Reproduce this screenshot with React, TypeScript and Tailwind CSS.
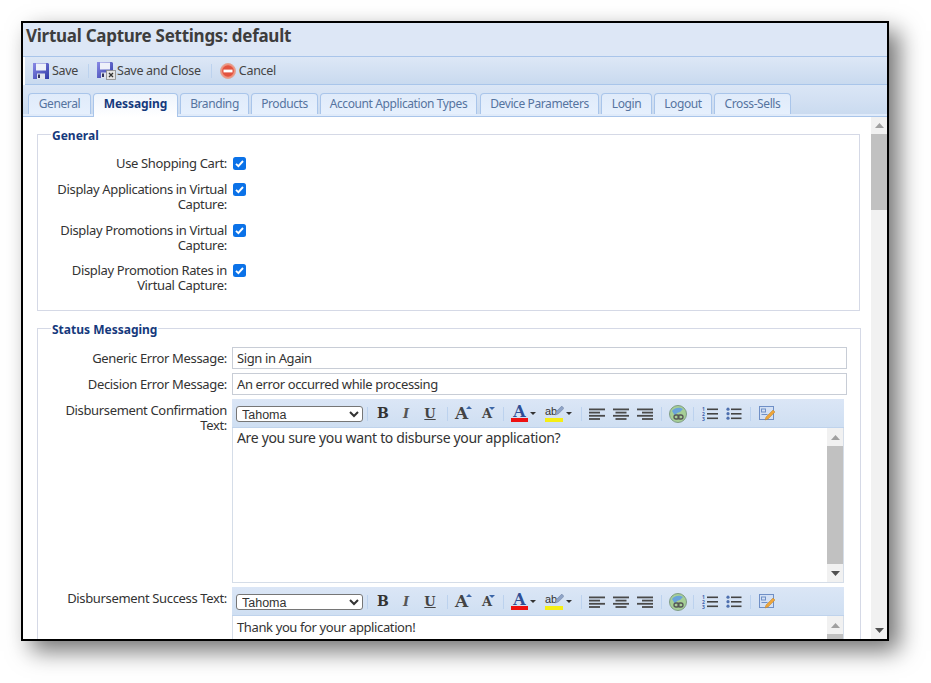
import React from "react";

const Save = ({ x = false }: { x?: boolean }) => (
  <svg width={x ? 19 : 16} height={x ? 18 : 16} viewBox={x ? "0 0 19 18" : "0 0 16 16"} className="shrink-0">
    <defs>
      <linearGradient id="sv" x1="0" y1="0" x2="1" y2="1">
        <stop offset="0" stopColor="#8a8ae6" />
        <stop offset="1" stopColor="#2f3aa8" />
      </linearGradient>
    </defs>
    <path d="M0 0h15l1 1v15H0z" fill="url(#sv)" />
    <rect x="3" y="0.5" width="10" height="7" fill="#eef1fa" />
    <rect x="4" y="10.5" width="8" height="5.5" fill="#dfe3ee" />
    <rect x="5" y="11.5" width="2" height="3.5" fill="#33345e" />
    {x && (
      <>
        <rect x="9.5" y="8.5" width="9" height="9" fill="#e4e4e4" stroke="#888" strokeWidth="0.8" />
        <path d="M12 11l4 4M16 11l-4 4" stroke="#333" strokeWidth="1.3" />
      </>
    )}
  </svg>
);

const Cancel = () => (
  <svg width="16" height="16" viewBox="0 0 16 16" className="shrink-0">
    <circle cx="8" cy="8" r="7.5" fill="#f0917e" stroke="#e0a796" />
    <circle cx="8" cy="8" r="5.8" fill="#e2533f" />
    <rect x="3.5" y="6.6" width="9" height="2.8" fill="#fff" />
  </svg>
);

const Sep = ({ cls }: { cls: string }) => <div className={`w-px h-[14px] shrink-0 bg-[#bcd2ee] ${cls}`} />;

const Caret = () => (
  <svg width="6" height="3" viewBox="0 0 6 3" className="shrink-0"><path d="M0 0h6L3 3z" fill="#333" /></svg>
);

const Lines = ({ a, cls }: { a: "l" | "c" | "r"; cls: string }) => {
  const w = [16, 11, 16, 11];
  return (
    <svg width="16" height="12" viewBox="0 0 16 12" className={`shrink-0 ${cls}`}>
      {w.map((v, i) => {
        const x = a === "l" ? 0 : a === "c" ? (16 - v) / 2 : 16 - v;
        return <rect key={i} x={x} y={i * 3.2 + 0.5} width={v} height="1.8" fill="#4a4a4a" />;
      })}
    </svg>
  );
};

const Toolbar = () => (
  <div className="h-[29px] shrink-0 flex items-center pl-1 pt-[1px] bg-gradient-to-b from-[#dbe6f6] to-[#cfdff2] border-b border-[#bfd3ec] tracking-normal">
    <select
      defaultValue="Tahoma"
      className="w-[127px] h-[16px] shrink-0 bg-white border border-[#767676] rounded-[3px] text-[12.5px] leading-none text-[#333] pl-[1px] [font-family:'Liberation_Sans',sans-serif]"
    >
      <option>Tahoma</option>
    </select>
    <Sep cls="ml-[4px]" />
    <span className="w-[30px] shrink-0 text-center text-[14px] font-bold text-[#333] [font-family:'DejaVu_Serif',serif]">B</span>
    <span className="w-[16px] shrink-0 text-center text-[13px] italic font-bold text-[#555] [font-family:'DejaVu_Serif',serif]">I</span>
    <span className="w-[32px] shrink-0 text-center text-[13px] font-bold underline text-[#444] [font-family:'DejaVu_Serif',serif]">U</span>
    <Sep cls="ml-[1px]" />
    <span className="relative w-[24px] shrink-0 pl-[7px] text-[17px] leading-none font-bold text-[#444] [font-family:'DejaVu_Serif',serif]">
      A<span className="absolute right-[0px] top-[1px] w-0 h-0 border-x-[3px] border-x-transparent border-b-[3px] border-b-[#3a66a8]" />
    </span>
    <span className="relative w-[30px] shrink-0 text-center text-[13px] leading-none font-bold text-[#444] [font-family:'DejaVu_Serif',serif]">
      A<span className="absolute right-[7px] top-[0px] w-0 h-0 border-x-[3px] border-x-transparent border-t-[3px] border-t-[#3a66a8]" />
    </span>
    <Sep cls="ml-[1px]" />
    <div className="flex items-center shrink-0 ml-[7px] gap-[2px]">
      <div className="flex flex-col items-center w-[17px]">
        <span className="text-[16px] leading-[13px] font-bold text-[#2f4f96] [font-family:'DejaVu_Serif',serif]">A</span>
        <span className="w-[17px] h-[4px] bg-[#ee1111]" />
      </div>
      <Caret />
    </div>
    <div className="flex items-center shrink-0 ml-[9px] gap-[3px]">
      <div className="flex flex-col w-[18px] relative">
        <span className="text-[11px] leading-[13px] text-[#333] [font-family:'Liberation_Sans',sans-serif]">ab</span>
        <svg width="10" height="11" viewBox="0 0 9 10" className="absolute right-[-1px] top-0"><path d="M1 9l1-3 5-5 2 2-5 5z" fill="#8fa4c8" stroke="#6d7f9f" strokeWidth="0.5" /></svg>
        <span className="w-[18px] h-[4px] bg-[#f5ee14]" />
      </div>
      <Caret />
    </div>
    <Sep cls="ml-[9px]" />
    <Lines a="l" cls="ml-[7px]" />
    <Lines a="c" cls="ml-[8px]" />
    <Lines a="r" cls="ml-[8px]" />
    <Sep cls="ml-[8px]" />
    <svg width="18" height="18" viewBox="0 0 18 18" className="ml-[7px] shrink-0">
      <circle cx="9" cy="9" r="8.5" fill="#a6cf96" stroke="#7f9c85" />
      <path d="M3 6c3-4 8-4 11-2l-3 3-3 1-2 3z" fill="#6aa3da" />
      <rect x="5" y="10" width="5" height="4" rx="2" fill="none" stroke="#555" strokeWidth="1.3" />
      <rect x="9" y="10" width="5" height="4" rx="2" fill="none" stroke="#555" strokeWidth="1.3" />
    </svg>
    <Sep cls="ml-[6px]" />
    <svg width="16" height="16" viewBox="0 0 16 16" className="ml-[8px] shrink-0">
      <text x="0" y="5" fontSize="5" fontWeight="700" fill="#3f63ad">1</text>
      <text x="0" y="10" fontSize="5" fontWeight="700" fill="#3f63ad">2</text>
      <text x="0" y="15" fontSize="5" fontWeight="700" fill="#3f63ad">3</text>
      <rect x="5" y="2.5" width="11" height="1.6" fill="#444" />
      <rect x="5" y="7" width="11" height="1.6" fill="#444" />
      <rect x="5" y="11.5" width="11" height="1.6" fill="#444" />
    </svg>
    <svg width="16" height="16" viewBox="0 0 16 16" className="ml-[8px] shrink-0">
      {[3.2, 7.7, 12.2].map((y) => (
        <circle key={y} cx="2" cy={y} r="1.6" fill="#4d6fae" />
      ))}
      <rect x="5" y="2.5" width="10.5" height="1.6" fill="#444" />
      <rect x="5" y="7" width="10.5" height="1.6" fill="#444" />
      <rect x="5" y="11.5" width="10.5" height="1.6" fill="#444" />
    </svg>
    <Sep cls="ml-[8px]" />
    <svg width="17" height="17" viewBox="0 0 17 17" className="ml-[8px] shrink-0">
      <rect x="0.5" y="1.5" width="14" height="13" fill="#d3e0f4" stroke="#6f8fc6" />
      <rect x="2.5" y="4" width="4" height="3" fill="none" stroke="#6f8fc6" />
      <rect x="2.5" y="9" width="6" height="1" fill="#6f8fc6" />
      <path d="M6 15l1-3 7-7 2 2-7 7z" fill="#eea53a" stroke="#bb8230" strokeWidth="0.5" />
    </svg>
  </div>
);

const Tri = ({ up, c = "#a0a0a0" }: { up?: boolean; c?: string }) => (
  <svg width="9" height="5" viewBox="0 0 9 5"><path d={up ? "M4.5 0L9 5H0z" : "M0 0h9L4.5 5z"} fill={c} /></svg>
);

const Editor = ({ text, textCls }: { text: string; textCls: string }) => (
  <div className="w-[612px] flex flex-col shrink-0">
    <Toolbar />
    <div className="flex border-x border-b border-[#d5dde8] h-[155px] bg-white overflow-hidden">
      <div className={`flex-1 px-1 leading-[18px] text-[#333] ${textCls}`}>{text}</div>
      <div className="w-[16px] shrink-0 bg-[#f1f1f1] flex flex-col items-center">
        <div className="h-[18px] shrink-0 flex items-center justify-center"><Tri up /></div>
        <div className="w-full h-[118px] shrink-0 bg-[#c1c1c1]" />
        <div className="h-[18px] shrink-0 flex items-center justify-center"><Tri c="#505050" /></div>
      </div>
    </div>
  </div>
);

const Check = ({ label, tall }: { label: React.ReactNode; tall?: boolean }) => (
  <div className={`flex items-start ${tall ? "h-[40.5px]" : "h-[26px]"}`}>
    <div className="w-[176px] text-right text-[13px] leading-[15px] tracking-[-0.35px] text-[#333]">{label}</div>
    <span className="ml-[6px] mt-[1px] w-[13px] h-[13px] rounded-[2.5px] bg-[#0b72e8] flex items-center justify-center">
      <svg width="11" height="11" viewBox="0 0 11 11"><path d="M2 5.8l2.4 2.4L9 3" fill="none" stroke="#fff" strokeWidth="1.9" /></svg>
    </span>
  </div>
);

const Tab = ({ label, w, active }: { label: string; w: string; active?: boolean }) => (
  <div
    className={`${w} rounded-t-[4px] border border-b-0 border-[#a9c5ea] flex items-center justify-center whitespace-nowrap text-[12px] ${
      active
        ? "h-[24px] pb-[3px] tracking-[-0.1px] bg-gradient-to-b from-[#eef4fc] to-white font-bold text-[#15397c] -mb-[3px] relative"
        : "h-[21px] tracking-[-0.4px] bg-gradient-to-b from-[#e0ebfa] to-[#e6f0fd] text-[#56749f]"
    }`}
  >
    {label}
  </div>
);

const labelCls = "w-[176px] text-right text-[13px] tracking-[-0.35px] text-[#333]";
const inputCls = "ml-[5px] w-[615px] h-[22px] border border-[#c8cdd6] px-1 pt-[1px] flex items-center text-[13px] tracking-[-0.38px] text-[#333]";
const legendCls = "text-[12px] font-bold text-[#15397c] px-[1px] pt-[4px] leading-[16px]";

export default function App() {
  return (
    <div className="w-[931px] h-[683px] bg-white pt-[21px] pl-[21px] overflow-hidden [font-family:'Noto_Sans',sans-serif]">
      <div className="w-[868px] h-[620px] border-2 border-black flex flex-col overflow-hidden bg-white shadow-[10px_10px_22px_rgba(0,0,0,0.55)]">
        <div className="h-[34px] shrink-0 bg-[#dde7f6] border-b border-[#a9c5ea] flex items-center pl-[3px] pb-[8px] text-[17px] font-bold tracking-[-0.27px] text-[#3d3d3d]">
          <span className="leading-none">Virtual Capture Settings: default</span>
        </div>
        <div className="h-[28px] shrink-0 ml-[2px] bg-gradient-to-b from-[#dde7f6] to-[#c9daef] border-b border-[#a9c5ea] flex items-center pl-[8px] text-[12.5px] tracking-[-0.3px] text-[#444]">
          <Save />
          <span className="ml-[3px] pt-[2px]">Save</span>
          <div className="ml-[10px] mr-[8px] w-px h-[14px] bg-[#bcd2ee]" />
          <Save x />
          <span className="ml-[1px] pt-[2px]">Save and Close</span>
          <div className="ml-[10px] mr-[8px] w-px h-[14px] bg-[#bcd2ee]" />
          <Cancel />
          <span className="ml-[3px] pt-[2px]">Cancel</span>
        </div>
        <div className="h-[32px] shrink-0 bg-gradient-to-b from-[#dbe6f6] to-[#c9daef] flex flex-col">
          <div className="flex-1 flex items-end gap-[2px] pl-[5px]">
            <Tab label="General" w="w-[63px]" />
            <Tab label="Messaging" w="w-[85px]" active />
            <Tab label="Branding" w="w-[69px]" />
            <Tab label="Products" w="w-[67px]" />
            <Tab label="Account Application Types" w="w-[157px]" />
            <div className="ml-[1px]"><Tab label="Device Parameters" w="w-[119px]" /></div>
            <Tab label="Login" w="w-[51px]" />
            <Tab label="Logout" w="w-[58px]" />
            <Tab label="Cross-Sells" w="w-[77px]" />
          </div>
          <div className="h-[3px] bg-[#e0ebfa] border-b border-[#a9c5ea]" />
        </div>
        <div className="flex-1 flex min-h-0 overflow-hidden">
          <div className="flex-1 min-w-0 pl-[14px] pr-[11px] pt-[7px] overflow-hidden">
            <fieldset className="border border-[#d5d9e6] px-[13px] h-[187px]">
              <legend className={legendCls}>General</legend>
              <div className="pt-[12px]">
                <Check label="Use Shopping Cart:" />
                <Check label="Display Applications in Virtual Capture:" tall />
                <Check label="Display Promotions in Virtual Capture:" tall />
                <Check label="Display Promotion Rates in Virtual Capture:" tall />
              </div>
            </fieldset>
            <fieldset className="mt-[7px] border border-[#d5d9e6] px-[13px] pb-4">
              <legend className={legendCls}>Status Messaging</legend>
              <div className="pt-[7px] flex flex-col">
                <div className="flex items-center h-[26px]">
                  <div className={`${labelCls} pt-[1px]`}>Generic Error Message:</div>
                  <div className={inputCls}>Sign in Again</div>
                </div>
                <div className="flex items-center h-[26px]">
                  <div className={`${labelCls} pt-[1px]`}>Decision Error Message:</div>
                  <div className={inputCls}>An error occurred while processing</div>
                </div>
                <div className="flex items-start mt-[2px]">
                  <div className={`${labelCls} leading-[15px] pt-[4px]`}>Disbursement Confirmation Text:</div>
                  <div className="ml-[5px]"><Editor text="Are you sure you want to disburse your application?" textCls="pt-[1px] text-[14px] tracking-[-0.33px]" /></div>
                </div>
                <div className="flex items-start mt-[4px]">
                  <div className={`${labelCls} leading-[15px] pt-[4px]`}>Disbursement Success Text:</div>
                  <div className="ml-[5px]"><Editor text="Thank you for your application!" textCls="pt-[2px] text-[13px] tracking-[-0.38px]" /></div>
                </div>
              </div>
            </fieldset>
          </div>
          <div className="w-[16px] shrink-0 bg-[#f1f1f1] flex flex-col items-center">
            <div className="h-[17px] shrink-0 flex items-center justify-center"><Tri up /></div>
            <div className="w-full h-[76px] shrink-0 bg-[#c1c1c1]" />
            <div className="flex-1" />
            <div className="h-[17px] shrink-0 flex items-center justify-center"><Tri c="#505050" /></div>
          </div>
        </div>
      </div>
    </div>
  );
}
